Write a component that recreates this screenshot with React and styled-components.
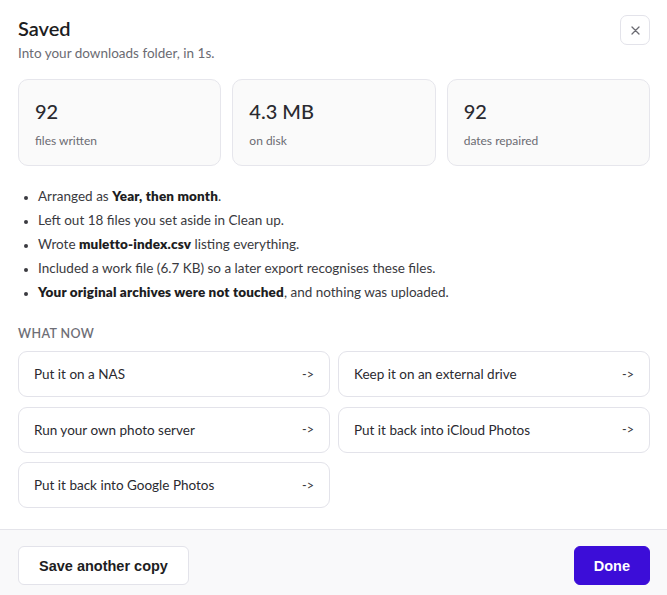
import React from "react";
import styled, { createGlobalStyle } from "styled-components";

const Global = createGlobalStyle`
  html, body { margin: 0; padding: 0; background: #fff; }
  body { font-family: Lato, "Noto Sans", sans-serif; color: #1d1d22; }
  * { box-sizing: border-box; }
`;

const Dialog = styled.div`
  width: 667px;
  height: 595px;
  overflow: hidden;
  display: flex;
  flex-direction: column;
  background: #fff;
`;

const Body = styled.div`
  padding: 16px 17px 21px 18px;
  display: flex;
  flex-direction: column;
`;

const Header = styled.div`
  display: flex;
  justify-content: space-between;
  align-items: flex-start;
`;

const Title = styled.h1`
  margin: 0;
  font-size: 20px;
  font-weight: 600;
  line-height: 24px;
  color: #1d1d22;
`;

const Subtitle = styled.p`
  margin: 4px 0 0;
  font-size: 13.5px;
  line-height: 18px;
  color: #6b6b72;
`;

const CloseButton = styled.button`
  width: 30px;
  height: 30px;
  margin-top: -1px;
  border: 1px solid #e3e3ea;
  border-radius: 7px;
  background: #fff;
  display: flex;
  align-items: center;
  justify-content: center;
  padding: 0;
`;

const Stats = styled.div`
  display: grid;
  grid-template-columns: repeat(3, 1fr);
  gap: 11px;
  margin-top: 17px;
`;

const StatCard = styled.div`
  height: 87px;
  background: #fafafa;
  border: 1px solid #e6e6ec;
  border-radius: 10px;
  padding: 18px 16px 0;
  display: flex;
  flex-direction: column;
`;

const StatValue = styled.div`
  font-size: 20px;
  line-height: 26px;
  font-weight: 500;
  color: #2a2a30;
`;

const StatLabel = styled.div`
  margin-top: 9px;
  font-size: 12px;
  line-height: 16px;
  color: #6b6b72;
`;

const Notes = styled.ul`
  margin: 18px 0 0;
  padding: 0 0 0 20px;
  list-style: disc;
`;

const Note = styled.li`
  font-size: 13.5px;
  line-height: 24px;
  color: #3a3a40;
  & b { font-weight: 800; color: #1d1d22; letter-spacing: 0.15px; }
  &::marker { font-size: 11px; color: #3a3a40; }
`;

const SectionLabel = styled.div`
  margin-top: 22px;
  font-size: 12.5px;
  line-height: 16px;
  font-weight: 600;
  letter-spacing: 0.4px;
  text-transform: uppercase;
  color: #6e6e76;
`;

const Options = styled.div`
  display: grid;
  grid-template-columns: 1fr 1fr;
  column-gap: 8px;
  row-gap: 9.5px;
  margin-top: 9px;
`;

const Option = styled.button`
  height: 46px;
  display: flex;
  align-items: center;
  justify-content: space-between;
  padding: 0 15px;
  background: #fff;
  border: 1px solid #e3e3ea;
  border-radius: 9px;
  font-family: inherit;
  font-size: 13.5px;
  color: #2a2a30;
  text-align: left;
`;

const Arrow = styled.span`
  color: #3a3a40;
  font-size: 12.5px;
`;

const Footer = styled.div`
  border-top: 1px solid #e4e4ea;
  background: #f9f9fa;
  display: flex;
  align-items: center;
  justify-content: space-between;
  padding: 16px 17px 16px 18px;
`;

const FooterButton = styled.button`
  height: 39px;
  padding: 0 ${(p) => (p.$primary ? "19px" : "20px")};
  border-radius: 6px;
  font-family: "Liberation Sans", Arial, sans-serif;
  font-size: 14.5px;
  font-weight: 700;
  border: 1px solid ${(p) => (p.$primary ? "#3c0dd8" : "#e3e3ea")};
  background: ${(p) => (p.$primary ? "#3c0dd8" : "#fff")};
  color: ${(p) => (p.$primary ? "#fff" : "#1d1d22")};
`;

const options = [
  "Put it on a NAS",
  "Keep it on an external drive",
  "Run your own photo server",
  "Put it back into iCloud Photos",
  "Put it back into Google Photos",
];

export default function App() {
  return (
    <>
      <Global />
      <Dialog>
        <Body>
          <Header>
            <div>
              <Title>Saved</Title>
              <Subtitle>Into your downloads folder, in 1s.</Subtitle>
            </div>
            <CloseButton aria-label="Close">
              <svg width="9" height="9" viewBox="0 0 9 9">
                <path d="M1 1 L8 8 M8 1 L1 8" stroke="#6b6b72" strokeWidth="1.3" strokeLinecap="round" />
              </svg>
            </CloseButton>
          </Header>
          <Stats>
            <StatCard>
              <StatValue>92</StatValue>
              <StatLabel>files written</StatLabel>
            </StatCard>
            <StatCard>
              <StatValue>4.3 MB</StatValue>
              <StatLabel>on disk</StatLabel>
            </StatCard>
            <StatCard>
              <StatValue>92</StatValue>
              <StatLabel>dates repaired</StatLabel>
            </StatCard>
          </Stats>
          <Notes>
            <Note>Arranged as <b>Year, then month</b>.</Note>
            <Note>Left out 18 files you set aside in Clean up.</Note>
            <Note>Wrote <b>muletto-index.csv</b> listing everything.</Note>
            <Note>Included a work file (6.7 KB) so a later export recognises these files.</Note>
            <Note><b>Your original archives were not touched</b>, and nothing was uploaded.</Note>
          </Notes>
          <SectionLabel>What now</SectionLabel>
          <Options>
            {options.map((o) => (
              <Option key={o}>
                <span>{o}</span>
                <Arrow>-&gt;</Arrow>
              </Option>
            ))}
          </Options>
        </Body>
        <Footer>
          <FooterButton>Save another copy</FooterButton>
          <FooterButton $primary>Done</FooterButton>
        </Footer>
      </Dialog>
    </>
  );
}
